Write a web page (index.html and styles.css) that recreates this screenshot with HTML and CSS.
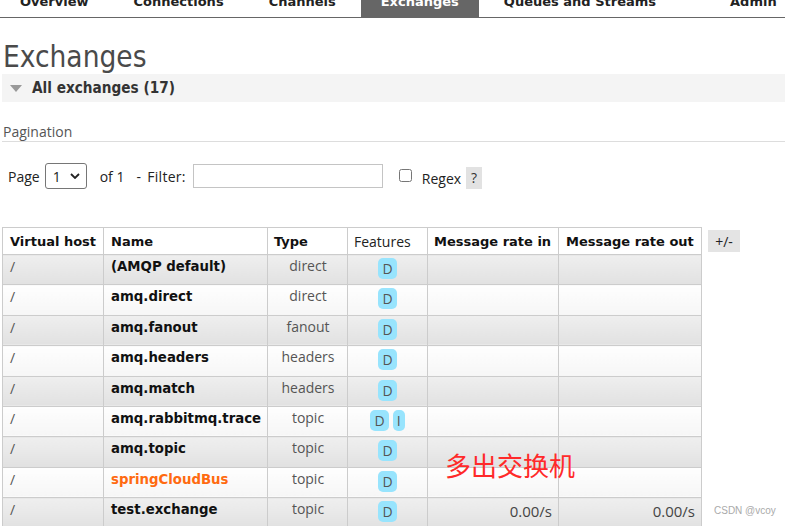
FILE: index.html
```html
<!DOCTYPE html>
<html lang="en">
<head>
<meta charset="utf-8">
<title>Exchanges</title>
<link rel="stylesheet" href="styles.css">
</head>
<body>
<nav class="tabs">
  <a class="tab">Overview</a>
  <a class="tab">Connections</a>
  <a class="tab">Channels</a>
  <a class="tab tab-active">Exchanges</a>
  <a class="tab">Queues and Streams</a>
  <a class="tab tab-admin">Admin</a>
</nav>
<main class="content">
  <h1 class="page-title">Exchanges</h1>
  <section class="panel">
    <h2 class="panel-title"><span class="tri"></span>All exchanges (17)</h2>
    <div class="pagination-head">Pagination</div>
    <div class="pager">
      <span class="lbl">Page</span>
      <span class="select-wrap">
        <select class="page-select"><option>1</option></select>
        <svg class="chev" width="10" height="6" viewBox="0 0 10 6"><path d="M1 1 L5 5 L9 1" fill="none" stroke="#222" stroke-width="1.8"/></svg>
      </span>
      <span class="lbl of">of 1</span>
      <span class="lbl filter">- Filter:</span>
      <input class="filter-input" type="text">
      <input class="regex-check" type="checkbox">
      <span class="lbl regex">Regex</span>
      <span class="help">?</span>
    </div>
    <div class="table-row">
      <table class="list">
        <colgroup>
          <col class="c-vhost"><col class="c-name"><col class="c-type"><col class="c-feat"><col class="c-in"><col class="c-out">
        </colgroup>
        <thead>
          <tr>
            <th>Virtual host</th>
            <th>Name</th>
            <th>Type</th>
            <th class="th-plain">Features</th>
            <th>Message rate in</th>
            <th>Message rate out</th>
          </tr>
        </thead>
        <tbody>
          <tr class="odd"><td class="vh">/</td><td class="nm">(AMQP default)</td><td class="ty">direct</td><td class="ft"><span class="badge">D</span></td><td></td><td></td></tr>
          <tr class="even"><td class="vh">/</td><td class="nm">amq.direct</td><td class="ty">direct</td><td class="ft"><span class="badge">D</span></td><td></td><td></td></tr>
          <tr class="odd"><td class="vh">/</td><td class="nm">amq.fanout</td><td class="ty">fanout</td><td class="ft"><span class="badge">D</span></td><td></td><td></td></tr>
          <tr class="even"><td class="vh">/</td><td class="nm">amq.headers</td><td class="ty">headers</td><td class="ft"><span class="badge">D</span></td><td></td><td></td></tr>
          <tr class="odd"><td class="vh">/</td><td class="nm">amq.match</td><td class="ty">headers</td><td class="ft"><span class="badge">D</span></td><td></td><td></td></tr>
          <tr class="even"><td class="vh">/</td><td class="nm">amq.rabbitmq.trace</td><td class="ty">topic</td><td class="ft"><span class="badge">D</span><span class="badge">I</span></td><td></td><td></td></tr>
          <tr class="odd"><td class="vh">/</td><td class="nm">amq.topic</td><td class="ty">topic</td><td class="ft"><span class="badge">D</span></td><td></td><td></td></tr>
          <tr class="even"><td class="vh">/</td><td class="nm nm-new">springCloudBus</td><td class="ty">topic</td><td class="ft"><span class="badge">D</span></td><td></td><td></td></tr>
          <tr class="odd"><td class="vh">/</td><td class="nm">test.exchange</td><td class="ty">topic</td><td class="ft"><span class="badge">D</span></td><td class="rate">0.00/s</td><td class="rate">0.00/s</td></tr>
        </tbody>
      </table>
      <button class="toggle">+/-</button>
    </div>
  </section>
</main>
<div class="note">多出交换机</div>
<div class="watermark">CSDN @vcoy</div>
</body>
</html>
```
FILE: styles.css
```css
html, body {
  margin: 0;
  padding: 0;
  background: #fff;
  overflow: hidden;
}
body {
  font-family: "DejaVu Sans", Verdana, sans-serif;
  font-size: 13px;
  color: #222;
  position: relative;
  width: 785px;
  height: 526px;
}

/* nav */
.tabs {
  display: flex;
  margin-top: -12px;
  height: 29px;
  padding-left: 2px;
  border-bottom: 1px solid #666;
  overflow: hidden;
}
.tab {
  display: block;
  flex-shrink: 0;
  white-space: nowrap;
  padding: 0 18px;
  margin-right: 9px;
  line-height: 27px;
  font-weight: bold;
  font-size: 13px;
  color: #222;
}
.tab-active {
  background: #666;
  color: #fff;
  padding: 0 20px;
  margin-left: -2px;
  margin-right: 7px;
}
.tab-admin {
  margin-left: 29px;
  margin-right: 0;
}

.content {
  padding-left: 2px;
}

.page-title {
  margin: 22px 0 0 1px;
  font-family: "DejaVu Sans Condensed", "DejaVu Sans", sans-serif;
  font-stretch: condensed;
  font-weight: normal;
  font-size: 29.5px;
  line-height: 34px;
  color: #4a4a4a;
}

.panel-title {
  margin: 0;
  height: 28px;
  line-height: 28px;
  background: #f4f4f4;
  font-family: "DejaVu Sans Condensed", "DejaVu Sans", sans-serif;
  font-stretch: condensed;
  font-size: 15.2px;
  font-weight: bold;
  color: #333;
  display: flex;
  align-items: center;
}
.tri {
  width: 0;
  height: 0;
  border-left: 6px solid transparent;
  border-right: 6px solid transparent;
  border-top: 7px solid #999;
  margin: 1px 10px 0 8px;
}

.pagination-head {
  margin-top: 20px;
  font-family: "Open Sans", "Noto Sans", sans-serif;
  font-size: 14px;
  line-height: 19px;
  color: #555;
  padding-left: 1px;
  border-bottom: 1px solid #ddd;
}

.pager {
  display: flex;
  align-items: center;
  margin-top: 21px;
  height: 26px;
  font-family: "Open Sans", "Noto Sans", sans-serif;
  font-size: 14px;
  color: #222;
}
.lbl { line-height: 19px; white-space: nowrap; }
.pager > .lbl:first-child { margin-left: 6px; }
.select-wrap {
  position: relative;
  margin-left: 5px;
  width: 42px;
  height: 26px;
}
.page-select {
  -webkit-appearance: none;
  appearance: none;
  box-sizing: border-box;
  width: 42px;
  height: 26px;
  border: 1px solid #767676;
  border-radius: 3px;
  background: #fff;
  font-family: "Open Sans", "Noto Sans", sans-serif;
  font-size: 14px;
  color: #222;
  padding: 0 0 0 7px;
  margin: 0;
}
.chev {
  position: absolute;
  left: 25px;
  top: 10px;
  pointer-events: none;
}
.of { margin-left: 13px; }
.filter { margin-left: 12px; word-spacing: 2px; letter-spacing: 0.3px; }
.filter-input {
  box-sizing: border-box;
  margin: 0 0 0 7px;
  width: 190px;
  height: 24px;
  border: 1px solid #c4c4c4;
  padding: 0;
}
.regex-check {
  margin: 0 0 0 16px;
  width: 13px;
  height: 13px;
  position: relative;
  top: -1px;
}
.regex {
  margin-left: 10px;
  position: relative;
  top: 2px;
}
.help {
  margin-left: 5px;
  width: 16px;
  height: 22px;
  line-height: 22px;
  text-align: center;
  background: #e2e2e2;
  color: #333;
  position: relative;
  top: 2px;
}

.table-row {
  display: flex;
  align-items: flex-start;
  gap: 6px;
  margin-top: 38px;
}
.list {
  border-collapse: collapse;
  table-layout: fixed;
  width: 699px;
}
.c-vhost { width: 101px; }
.c-name { width: 164px; }
.c-type { width: 80px; }
.c-feat { width: 80px; }
.c-in { width: 131px; }
.c-out { width: 143px; }

.list th, .list td {
  border: 1px solid #ccc;
  white-space: nowrap;
  overflow: hidden;
}
.list th {
  background: #fff;
  text-align: left;
  font-weight: bold;
  font-size: 13px;
  line-height: 18px;
  padding: 5px 0 3px 6px;
  color: #111;
}
.list th:first-child, .list th:nth-child(2), .list th:last-child { padding-left: 7px; }
.list th.th-plain {
  font-family: "Open Sans", "Noto Sans", sans-serif;
  font-weight: normal;
  font-size: 14px;
  color: #222;
}
.list tbody tr { height: 30.4px; }
.list td {
  vertical-align: top;
  padding: 3px 6px 0 7px;
  line-height: 18px;
}
.list tr.odd td { background: linear-gradient(#efefef, #e1e1e1); }
.list tr.even td { background: linear-gradient(#fefefe, #f6f6f6); }

.vh {
  font-family: "Open Sans", "Noto Sans", sans-serif;
  font-size: 14px;
  color: #555;
}
.nm {
  font-weight: bold;
  font-size: 13.3px;
  color: #111;
}
.nm-new { color: #ff6a10; }
.ty {
  text-align: center;
  font-family: "Open Sans", "Noto Sans", sans-serif;
  font-size: 14px;
  color: #555;
}
.list td.ty { padding-top: 2px; }
.list td.ft {
  text-align: center;
  padding: 3px 0 0 0;
  font-size: 0;
}
.badge {
  display: inline-block;
  vertical-align: top;
  height: 21px;
  line-height: 22px;
  padding: 0 4px;
  margin: 0 2px;
  border-radius: 5px;
  background: #98e4fd;
  font-family: "Open Sans", "Noto Sans", sans-serif;
  font-size: 14px;
  color: #555;
}
.list td.rate {
  text-align: right;
  padding-right: 6px;
  padding-top: 4px;
  font-family: "Open Sans", "Noto Sans", sans-serif;
  font-size: 15px;
  color: #444;
}

.toggle {
  margin: 3px 0 0 0;
  width: 32px;
  height: 22px;
  border: 0;
  padding: 0;
  background: #e4e4e4;
  font-family: "Open Sans", "Noto Sans", sans-serif;
  font-size: 14px;
  color: #222;
}

.note {
  position: absolute;
  left: 445px;
  top: 450px;
  font-family: "Noto Sans CJK SC", sans-serif;
  font-size: 26px;
  line-height: 30px;
  color: #ff2a2a;
}
.watermark {
  position: absolute;
  left: 714px;
  top: 504px;
  font-family: "Liberation Sans", "Noto Sans", sans-serif;
  font-size: 10px;
  line-height: 14px;
  color: #aaa;
}
```
